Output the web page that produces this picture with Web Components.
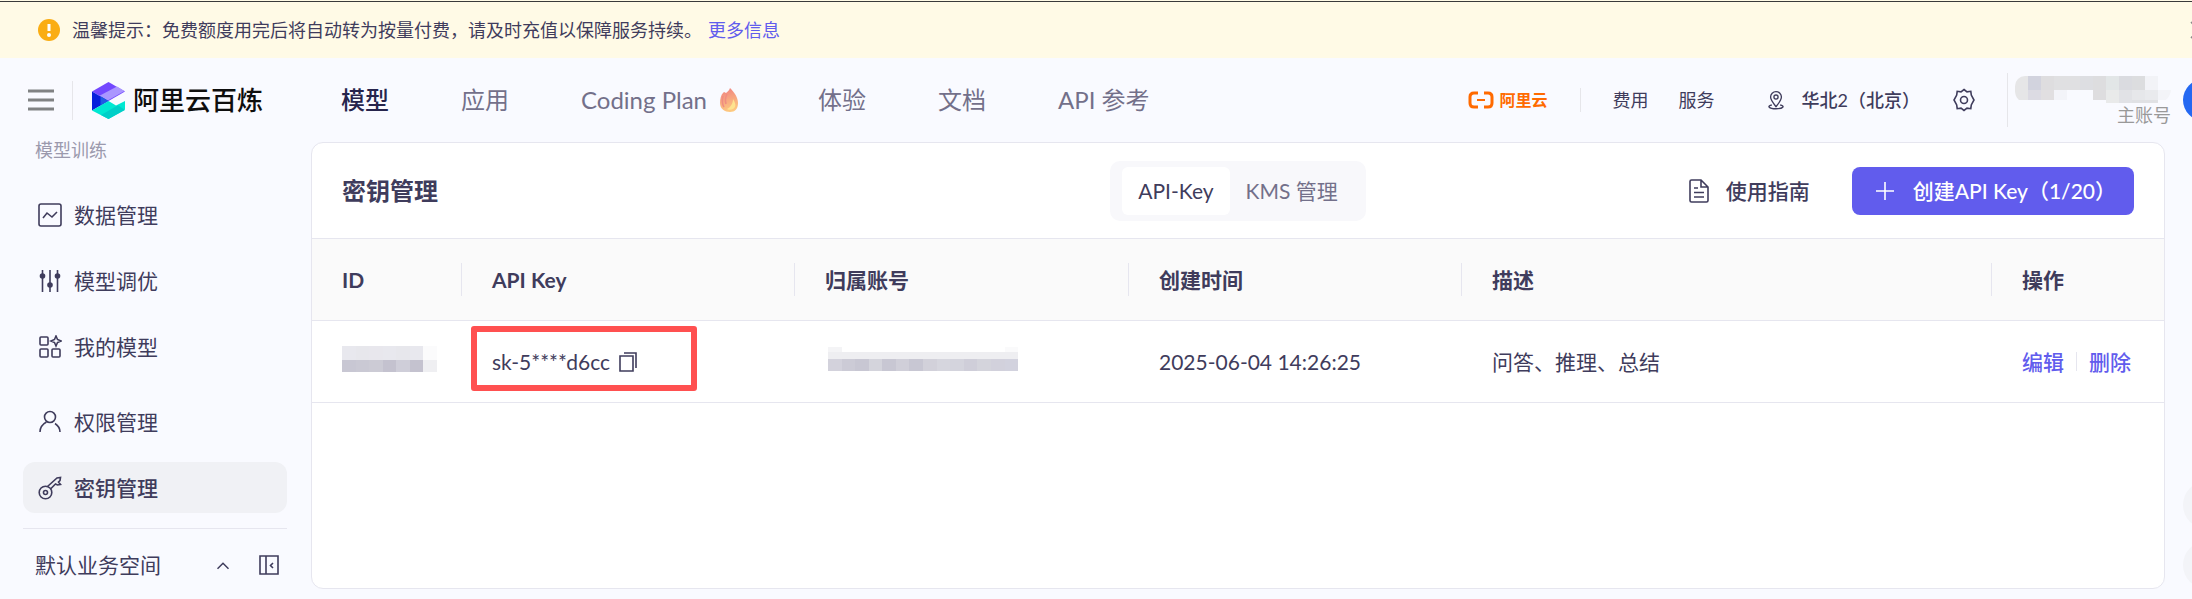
<!DOCTYPE html>
<html lang="zh-CN">
<head>
<meta charset="utf-8">
<meta name="viewport" content="width=device-width, initial-scale=1">
<title>密钥管理</title>
<style>
  body {
    margin: 0;
    background: #f9faff;
    color: #3f3c5c;
    font-family: Lato, "Noto Sans CJK SC", sans-serif;
    font-size: 21px;
    line-height: 30px;
    --line: #e6e6ef;
    --accent: #615ced;
    --muted: #73708a;
  }
</style>
</head>
<body>
<bl-app></bl-app>

<script>
const ICONS = {
  menu: `<path d="M1 3h26M1 12h26M1 21h26" stroke="#808283" stroke-width="3"/>`,
  warn: `<circle cx="12" cy="12" r="11" fill="#faad14"/><path d="M12 6v7" stroke="#fff" stroke-width="3"/><circle cx="12" cy="17" r="2" fill="#fff"/>`,
  close: `<path d="M4 4l16 16M20 4L4 20"/>`,
  logo: `<path d="M16.500 0L33 9.500 16.500 19 0 9.500z" fill="#7347ff"/>
    <path d="M7 14L25 4.500l7.500 4.500L14 19.500z" fill="#aa96ff"/>
    <path d="M0 9.500l16.500 9.500L0 28.500z" fill="#0620dc"/>
    <path d="M8.500 14.200l8 4.800-8 4.700z" fill="#1f5be3"/>
    <path d="M16.500 19l7.500 4.400 9-4.400v8.500L16.500 37 0 28.500z" fill="#00e8d2"/>
    <path d="M9 33l17-9.700 7 4.700-16.500 9z" fill="#00cfc8"/>`,
  flame: `<defs><linearGradient id="f" x1=".4" y1="0" x2=".6" y2="1"><stop offset="0" stop-color="#f0716b"/><stop offset=".55" stop-color="#f9a06a"/><stop offset="1" stop-color="#ffc46b"/></linearGradient></defs>
    <g opacity=".85"><path d="M10 0c4 4 8 9 8 15 0 6-3 9-8 9S0 21 0 15c0-4 1-8 3-10l1-1 2 1C7 4 9 3 10 0z" fill="url(#f)"/>
    <path d="M3 8c-1 4-1 8 1 11M7 6c-2 4-2 7-1 10" stroke="#ee7a6c" fill="none"/>
    <path d="M13 11c2 3 3 6 2 8s-5 4-8 2c4-2 6-6 6-10z" fill="#ffe07c"/></g>`,
  aliyun: `<path d="M10 2H6Q2 2 2 6v6q0 4 4 4h4M16 2h4q4 0 4 4v6q0 4-4 4h-4" stroke="#ff6a00" stroke-width="3"/><path d="M9 9h8" stroke="#ff6a00" stroke-width="2"/>`,
  pin: `<path d="M12 20C8 15 5.500 12 5.500 8.500a6.500 6.500 0 0 1 13 0C18.500 12 16 15 12 20z"/><circle cx="12" cy="8.500" r="2.500"/><path d="M7 18c-6 1-4 4.500 5 4.500s11-3.500 5-4.500"/>`,
  gear: `<path d="M12 1.500l3 2.300 3.800-.5.500 3.800 2.700 4.900-2.700 4.900-.5 3.800-3.800-.5-3 2.300-3-2.300-3.800.5-.5-3.800L2 12l2.700-4.900.5-3.800 3.800.5z"/><circle cx="12" cy="12" r="3.500"/>`,
  data: `<rect x="1" y="1" width="22" height="22" rx="2"/><path d="M5 15l4-5 5 4 5-5"/>`,
  tune: `<path d="M4.500 1v22M12 1v22M19.500 1v22"/><g fill="currentColor" stroke="none"><circle cx="4.500" cy="7" r="2.800"/><circle cx="12" cy="16" r="2.800"/><circle cx="19.500" cy="7" r="2.800"/></g>`,
  model: `<rect x="2" y="2" width="8" height="8" rx="1"/><rect x="2" y="14" width="8" height="8" rx="1"/><rect x="14" y="14" width="8" height="8" rx="1"/><path d="M18 1l1.500 3.500L23 6l-3.500 1.500L18 11l-1.500-3.500L13 6l3.500-1.500z"/>`,
  user: `<circle cx="12" cy="7" r="5.500"/><path d="M2 22c0-4 2-7.500 6.500-10M17 13.500c3 2 5 5 5 8.500"/>`,
  key: `<circle cx="7.500" cy="16.500" r="6.300"/><circle cx="7.500" cy="16.500" r="2"/><path d="M9.500 10.500L19 2l3.500-.5-.5 3L20.500 6l2 2.500-3 .5-2-1-5 5"/>`,
  up: `<path d="M6 16l6-6 6 6"/>`,
  fold: `<path d="M3 3h18v18H3zM9 3v18M16 10l-2.500 2.500L16 15"/>`,
  doc: `<path d="M14 1H4.500Q3 1 3 2.500v19Q3 23 4.500 23h15q1.500 0 1.500-1.500V8zM14 1v7h7M7 9h4M7 13.500h10M7 18h10"/>`,
  plus: `<path d="M12 3v18M3 12h18"/>`,
  copy: `<path d="M3 6h13v15H3zM7 3h12v15"/>`
};

// bl-icon: name, w, h and box (viewBox size) attributes
class BlIcon extends HTMLElement {
  connectedCallback() {
    const w = this.getAttribute("w") || 24;
    const h = this.getAttribute("h") || w;
    const box = this.getAttribute("box") || "24 24";
    this.attachShadow({ mode: "open" }).innerHTML = `
      <style>
        :host { display: block; flex: none; }
        svg { display: block; }
      </style>
      <svg width="${w}" height="${h}" viewBox="0 0 ${box}" fill="none" stroke="currentColor" stroke-width="1.600" aria-hidden="true"><g ${/logo|flame|warn/.test(this.getAttribute("name")) ? 'stroke="none"' : ""}>${ICONS[this.getAttribute("name")]}</g></svg>
    `;
  }
}

// bl-mosaic: pixelated cover over private text. Rows are "height:color,color,..."
class BlMosaic extends HTMLElement {
  connectedCallback() {
    const rows = this.getAttribute("rows").split("|").map((r) => {
      const [height, cells] = r.split(":");
      return `<div style="height:${height}px">${cells.split(",").map((c) => `<i style="background:${c ? "#" + c : "transparent"}"></i>`).join("")}</div>`;
    });
    this.attachShadow({ mode: "open" }).innerHTML = `
      <style>
        :host { display: block; overflow: hidden; }
        div { display: flex; }
        i { flex: 1; }
      </style>
      ${rows.join("")}
    `;
  }
}

class BlNotice extends HTMLElement {
  connectedCallback() {
    this.attachShadow({ mode: "open" }).innerHTML = `
      <style>
        :host {
          display: block;
          background: #fffae6;
          border-top: 1px solid #fffae6;
          font-size: 18px;
          overflow: hidden;
        }
        .bar {
          display: flex;
          align-items: center;
          gap: 11px;
          padding: 13px 0 13px 37px;
          border-top: 1px solid #3a3a3a;
        }
        .bar > span { flex: 1; white-space: nowrap; }
        ::slotted(a) { color: var(--accent); text-decoration: none; margin-left: 6px; }
        button {
          border: 0;
          padding: 0;
          background: none;
          color: #8a8a8a;
          margin-right: -19px;
        }
      </style>
      <div class="bar">
        <bl-icon name="warn"></bl-icon>
        <span><slot></slot></span>
        <button aria-label="关闭"><bl-icon name="close"></bl-icon></button>
      </div>
    `;
  }
}

class BlHeader extends HTMLElement {
  connectedCallback() {
    this.attachShadow({ mode: "open" }).innerHTML = `
      <style>
        :host {
          display: flex;
          align-items: center;
          height: 84px;
          overflow: hidden;
          white-space: nowrap;
        }
        a { color: inherit; text-decoration: none; }
        button { border: 0; padding: 0; background: none; color: inherit; font: inherit; display: flex; align-items: center; }
        .sep { width: 1px; height: 24px; background: #e6e6ea; flex: none; }
        .left { display: flex; align-items: center; padding-left: 27px; }
        .left .sep { height: 39px; margin: 0 19px 0 17px; }
        .brand { display: flex; align-items: center; gap: 8px; color: #0e0e0e; font-size: 26px; font-weight: 500; }
        nav { display: flex; align-items: center; gap: 72px; margin-left: 78px; font-size: 24px; color: var(--muted); }
        nav a { display: flex; align-items: center; gap: 13px; }
        nav .on { color: #26244c; font-weight: 500; }
        nav bl-icon { margin-right: 8px; }
        .right { display: flex; align-items: center; margin-left: auto; font-size: 18px; }
        .ali { display: flex; align-items: center; gap: 6px; color: #ff6a00; font-size: 16px; font-weight: 700; }
        .ali + .sep { margin-left: 32px; }
        .links { display: flex; gap: 30px; margin-left: 32px; }
        .region { gap: 16px; margin: 0 32px 0 51px; }
        .region b { font-weight: 500; }
        .region span { font-weight: 400; }
        .right .tall { height: 54px; margin-left: 31px; }
        .user { display: flex; flex-direction: column; align-items: flex-end; width: 163px; height: 54px; }
        .user bl-mosaic { width: 156px; margin-top: 3px; border-radius: 10px 0 14px 12px; }
        .user span { line-height: 20px; color: #999; margin-top: 2px; }
        .avatar { width: 42px; height: 42px; border-radius: 50%; background: #2468f2; margin: 0 -33px 0 12px; flex: none; }
      </style>
      <div class="left">
        <button aria-label="菜单"><bl-icon name="menu" w="28" h="24" box="28 24"></bl-icon></button>
        <i class="sep"></i>
        <a class="brand" href="#"><bl-icon name="logo" w="33" h="37" box="33 37"></bl-icon>阿里云百炼</a>
      </div>
      <nav>
        <a class="on" href="#model">模型</a>
        <a href="#app">应用</a>
        <a href="#plan">Coding Plan <bl-icon name="flame" w="18" box="18 24" h="24"></bl-icon></a>
        <a href="#try">体验</a>
        <a href="#docs">文档</a>
        <a href="#api">API 参考</a>
      </nav>
      <div class="right">
        <a class="ali" href="#aliyun"><bl-icon name="aliyun" w="26" h="18" box="26 18"></bl-icon>阿里云</a>
        <i class="sep"></i>
        <div class="links"><a href="#fee">费用</a><a href="#service">服务</a></div>
        <button class="region"><bl-icon name="pin" w="20"></bl-icon><b>华北<span>2</span>（北京）</b></button>
        <button aria-label="设置"><bl-icon name="gear"></bl-icon></button>
        <i class="sep tall"></i>
        <div class="user">
          <bl-mosaic rows="14:e6e6e7,d2d3de,dedddf,e0e0e2,e0e0e2,dddee2,dddddf,e2e6e7,dadbe0,dcdddf,f2f3f7,|10:e6e6e7,dcdbe3,e1dfe1,f3f4f9,,,dedddf,e9eaea,e1e2e6,e6e7ea,e9eaed,f3f4f8|3:,,,,,,,e9eaea,e1e2e6,e0e1e4,e0e1e4,"></bl-mosaic>
          <span>主账号</span>
        </div>
        <i class="avatar"></i>
      </div>
    `;
  }
}

class BlSideItem extends HTMLElement {
  connectedCallback() {
    this.attachShadow({ mode: "open" }).innerHTML = `
      <style>
        :host { display: block; }
        a {
          display: flex;
          align-items: center;
          gap: 12px;
          height: 51px;
          padding-left: 15px;
          border-radius: 12px;
          color: inherit;
          text-decoration: none;
        }
        :host([active]) a { background: #f0f1f5; font-weight: 500; }
      </style>
      <a href="#"><bl-icon name="${this.getAttribute("icon")}"></bl-icon><slot></slot></a>
    `;
  }
}

class BlSidebar extends HTMLElement {
  connectedCallback() {
    this.attachShadow({ mode: "open" }).innerHTML = `
      <style>
        :host {
          display: flex;
          flex-direction: column;
          flex: none;
          width: 264px;
          padding: 0 24px 0 23px;
        }
        h2 { margin: 0 0 31px 12px; font-size: 18px; line-height: 16px; font-weight: 400; color: #9b99ad; }
        nav { display: flex; flex-direction: column; gap: 15px; }
        nav + nav { margin-top: 24px; }
        footer {
          display: flex;
          align-items: center;
          gap: 23px;
          margin-top: 15px;
          padding: 21px 6px 19px 12px;
          border-top: 1px solid var(--line);
        }
        footer span { flex: 1; }
        footer button { border: 0; padding: 0; background: none; color: inherit; }
      </style>
      <h2>模型训练</h2>
      <nav><slot></slot></nav>
      <nav><slot name="bottom"></slot></nav>
      <footer>
        <span>默认业务空间</span>
        <button aria-label="切换空间"><bl-icon name="up" w="22"></bl-icon></button>
        <button aria-label="收起"><bl-icon name="fold"></bl-icon></button>
      </footer>
    `;
  }
}

class BlKeyTable extends HTMLElement {
  connectedCallback() {
    this.attachShadow({ mode: "open" }).innerHTML = `
      <style>
        :host { display: block; }
        table { width: 100%; table-layout: fixed; border-collapse: separate; border-spacing: 0; }
        th, td {
          height: 81px;
          padding: 0 0 0 30px;
          border-bottom: 1px solid var(--line);
          text-align: left;
          white-space: nowrap;
        }
        th {
          font-weight: 700;
          background: #fafafa linear-gradient(var(--line), var(--line)) right center / 1px 33px no-repeat;
        }
        th:last-child { background-image: none; }
        .key { position: relative; display: flex; align-items: center; gap: 7px; }
        .key button { border: 0; padding: 0; background: none; color: inherit; }
        /* highlight frame lies over the cell */
        .mark {
          position: absolute;
          left: -21px;
          top: -21px;
          width: 214px;
          height: 53px;
          border: 6px solid #ff5050;
          border-radius: 3px;
        }
        bl-mosaic { margin-bottom: 6px; }
        .id { width: 95px; }
        .owner { width: 190px; margin-left: 3px; }
        .ops { display: flex; align-items: center; gap: 12px; font-weight: 500; }
        .ops a { color: var(--accent); text-decoration: none; }
        .ops i { width: 1px; height: 19px; background: var(--line); }
      </style>
      <table>
        <colgroup>
          <col style="width:150px"><col style="width:333px"><col style="width:334px">
          <col style="width:333px"><col><col style="width:172px">
        </colgroup>
        <thead>
          <tr><th>ID</th><th>API Key</th><th>归属账号</th><th>创建时间</th><th>描述</th><th>操作</th></tr>
        </thead>
        <tbody>
          <tr>
            <td><bl-mosaic class="id" rows="14:e8e8ee,e7e7ec,e8e7ed,e8e8ee,e7e7ec,e8e8ee,fbfbfc|12:c8c7d3,cac9d4,cccbd5,c4c2cf,cfced9,c4c2cf,efeff2"></bl-mosaic></td>
            <td><div class="key"><span>sk-5****d6cc</span><button aria-label="复制"><bl-icon name="copy"></bl-icon></button><i class="mark"></i></div></td>
            <td><bl-mosaic class="owner" rows="5:f4f4f6,,,,,,,,,,,,,fafafb|7:eeeef1,eeeef1,eeeef1,eeeef1,eeeef1,eeeef1,eeeef1,eeeef1,eeeef1,eeeef1,eeeef1,eeeef1,eeeef1,eeeef1,eeeef1|12:d3d2dc,cccbd6,c8c7d3,d4d4dc,c8c7d3,d0cfd9,c8c7d3,d2d1da,d6d6de,d4d4dd,cfced9,d4d4dc,d2d1dc,d2d2de"></bl-mosaic></td>
            <td>2025-06-04 14:26:25</td>
            <td>问答、推理、总结</td>
            <td><div class="ops"><a href="#edit">编辑</a><i></i><a href="#delete">删除</a></div></td>
          </tr>
        </tbody>
      </table>
    `;
  }
}

class BlKeyPanel extends HTMLElement {
  connectedCallback() {
    this.attachShadow({ mode: "open" }).innerHTML = `
      <style>
        :host {
          display: block;
          flex: 1;
          min-width: 0;
          margin: 0 27px 10px 0;
          background: #fff;
          border: 1px solid var(--line);
          border-radius: 12px;
          overflow: hidden;
        }
        header {
          display: grid;
          grid-template-columns: 1fr auto 1fr;
          align-items: center;
          height: 95px;
          padding: 0 30px;
          border-bottom: 1px solid var(--line);
        }
        h1 { margin: 0; font-size: 24px; font-weight: 600; }
        button { border: 0; font: inherit; color: inherit; background: none; }
        .tabs { display: flex; padding: 6px 12px; background: #f8f8fb; border-radius: 10px; }
        .tabs button { height: 48px; padding: 0 16px; border-radius: 6px; color: var(--muted); }
        .tabs button.on { background: #fff; color: inherit; }
        .side { display: flex; justify-content: flex-end; align-items: center; gap: 42px; font-weight: 500; }
        .side a { display: flex; align-items: center; gap: 15px; color: inherit; text-decoration: none; }
        .create {
          display: flex;
          align-items: center;
          gap: 16px;
          height: 48px;
          padding: 0 18px 0 21px;
          border-radius: 8px;
          background: var(--accent);
          color: #fff;
        }
      </style>
      <header>
        <h1>密钥管理</h1>
        <div class="tabs" role="tablist">
          <button class="on" role="tab" aria-selected="true">API-Key</button>
          <button role="tab" aria-selected="false">KMS 管理</button>
        </div>
        <div class="side">
          <a href="#guide"><bl-icon name="doc"></bl-icon>使用指南</a>
          <button class="create"><bl-icon name="plus"></bl-icon>创建API Key（1/20）</button>
        </div>
      </header>
      <bl-key-table></bl-key-table>
    `;
  }
}

class BlApp extends HTMLElement {
  connectedCallback() {
    this.attachShadow({ mode: "open" }).innerHTML = `
      <style>
        :host { display: flex; flex-direction: column; min-height: 100vh; }
        main { display: flex; flex: 1; }
        .float { position: fixed; right: -39px; bottom: 10px; display: grid; gap: 12px; }
        .float button { width: 48px; height: 48px; padding: 0; border: 0; border-radius: 50%; background: #f3f4f8; }
      </style>
      <bl-notice>温馨提示：免费额度用完后将自动转为按量付费，请及时充值以保障服务持续。<a href="#more">更多信息</a></bl-notice>
      <bl-header></bl-header>
      <main>
        <bl-sidebar>
          <bl-side-item icon="data">数据管理</bl-side-item>
          <bl-side-item icon="tune">模型调优</bl-side-item>
          <bl-side-item icon="model">我的模型</bl-side-item>
          <bl-side-item icon="user" slot="bottom">权限管理</bl-side-item>
          <bl-side-item icon="key" slot="bottom" active>密钥管理</bl-side-item>
        </bl-sidebar>
        <bl-key-panel></bl-key-panel>
      </main>
      <div class="float"><button aria-label="客服"></button><button aria-label="反馈"></button></div>
    `;
  }
}

customElements.define("bl-icon", BlIcon);
customElements.define("bl-mosaic", BlMosaic);
customElements.define("bl-notice", BlNotice);
customElements.define("bl-header", BlHeader);
customElements.define("bl-side-item", BlSideItem);
customElements.define("bl-sidebar", BlSidebar);
customElements.define("bl-key-table", BlKeyTable);
customElements.define("bl-key-panel", BlKeyPanel);
customElements.define("bl-app", BlApp);
</script>
</body>
</html>
